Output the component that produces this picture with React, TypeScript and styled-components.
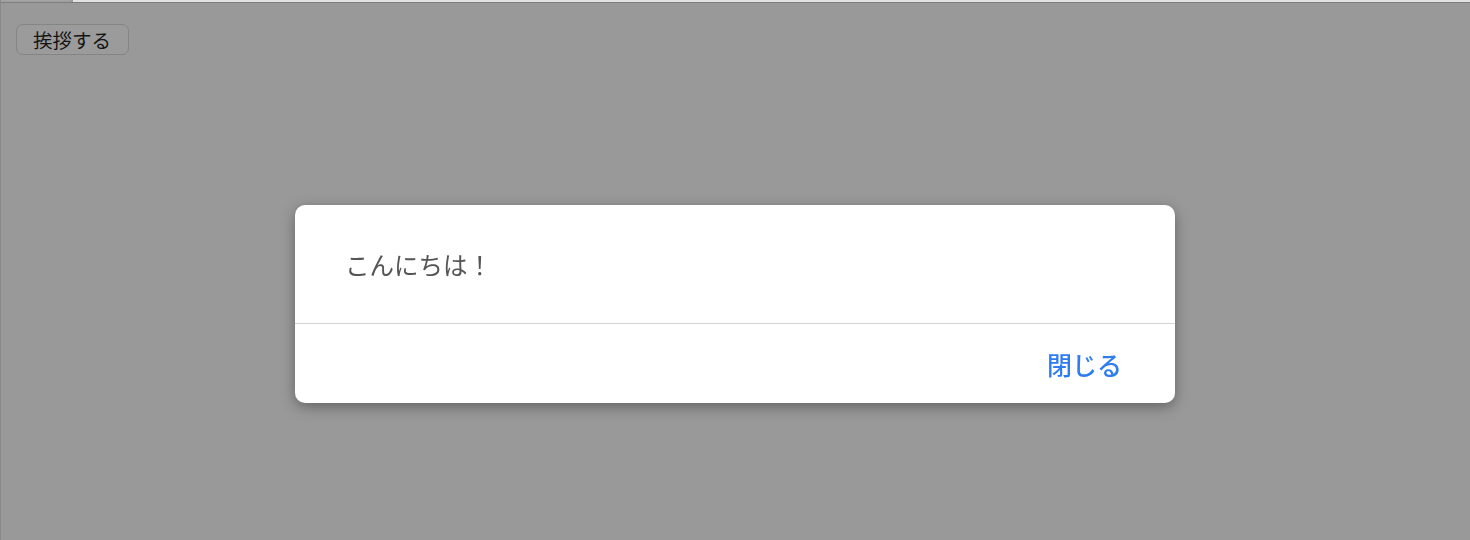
import React from "react";
import styled, { createGlobalStyle } from "styled-components";

const GlobalStyle = createGlobalStyle`
  html, body {
    margin: 0;
    padding: 0;
    background: #999999;
  }
  body {
    font-family: "Noto Sans CJK JP", "Noto Sans", sans-serif;
  }
`;

const Page = styled.div`
  min-height: 540px;
  background: #999999;
  border-left: 1px solid #8a8a8a;
  box-sizing: border-box;
`;

const TopStrip = styled.div`
  display: flex;
  height: 2px;
  border-bottom: 1px solid #7c7c7c;
`;

const StripPart = styled.div<{ $light?: boolean }>`
  height: 100%;
  width: ${(p) => (p.$light ? "auto" : "70px")};
  flex: ${(p) => (p.$light ? "1" : "none")};
  margin-left: ${(p) => (p.$light ? "2px" : "0")};
  background: ${(p) => (p.$light ? "#e2e2e2" : "#a2a2a2")};
`;

const Content = styled.div`
  padding: 21px 15px;
`;

const GreetButton = styled.button`
  font-family: "Noto Sans CJK JP", sans-serif;
  font-size: 19.5px;
  line-height: 28px;
  height: 31px;
  padding: 0 17px 0 16px;
  color: #151515;
  background: #9b9b9b;
  border: 1px solid #858585;
  border-radius: 7px;
  cursor: pointer;
`;

const Overlay = styled.div`
  position: fixed;
  inset: 0;
  display: flex;
  justify-content: center;
  align-items: flex-start;
  padding-top: 205px;
`;

const Dialog = styled.div`
  width: 880px;
  background: #ffffff;
  border-radius: 10px;
  box-shadow: 0 4px 14px rgba(0, 0, 0, 0.35);
  overflow: hidden;
`;

const Body = styled.div`
  height: 119px;
  padding: 0 50px;
  display: flex;
  align-items: center;
  font-size: 24.5px;
  color: #555555;
  border-bottom: 1px solid #d3d3d3;
  box-sizing: border-box;
`;

const Footer = styled.div`
  height: 79px;
  display: flex;
  justify-content: flex-end;
  align-items: center;
  padding: 0 53px;
  box-sizing: border-box;
`;

const CloseButton = styled.button`
  font-family: "Noto Sans CJK JP", sans-serif;
  font-size: 25px;
  font-weight: 500;
  color: #2f7cf0;
  background: none;
  border: none;
  padding: 0;
  cursor: pointer;
`;

export default function App() {
  return (
    <>
      <GlobalStyle />
      <Page>
        <TopStrip>
          <StripPart />
          <StripPart $light />
        </TopStrip>
        <Content>
          <GreetButton>挨拶する</GreetButton>
        </Content>
        <Overlay>
          <Dialog>
            <Body>こんにちは！</Body>
            <Footer>
              <CloseButton>閉じる</CloseButton>
            </Footer>
          </Dialog>
        </Overlay>
      </Page>
    </>
  );
}
